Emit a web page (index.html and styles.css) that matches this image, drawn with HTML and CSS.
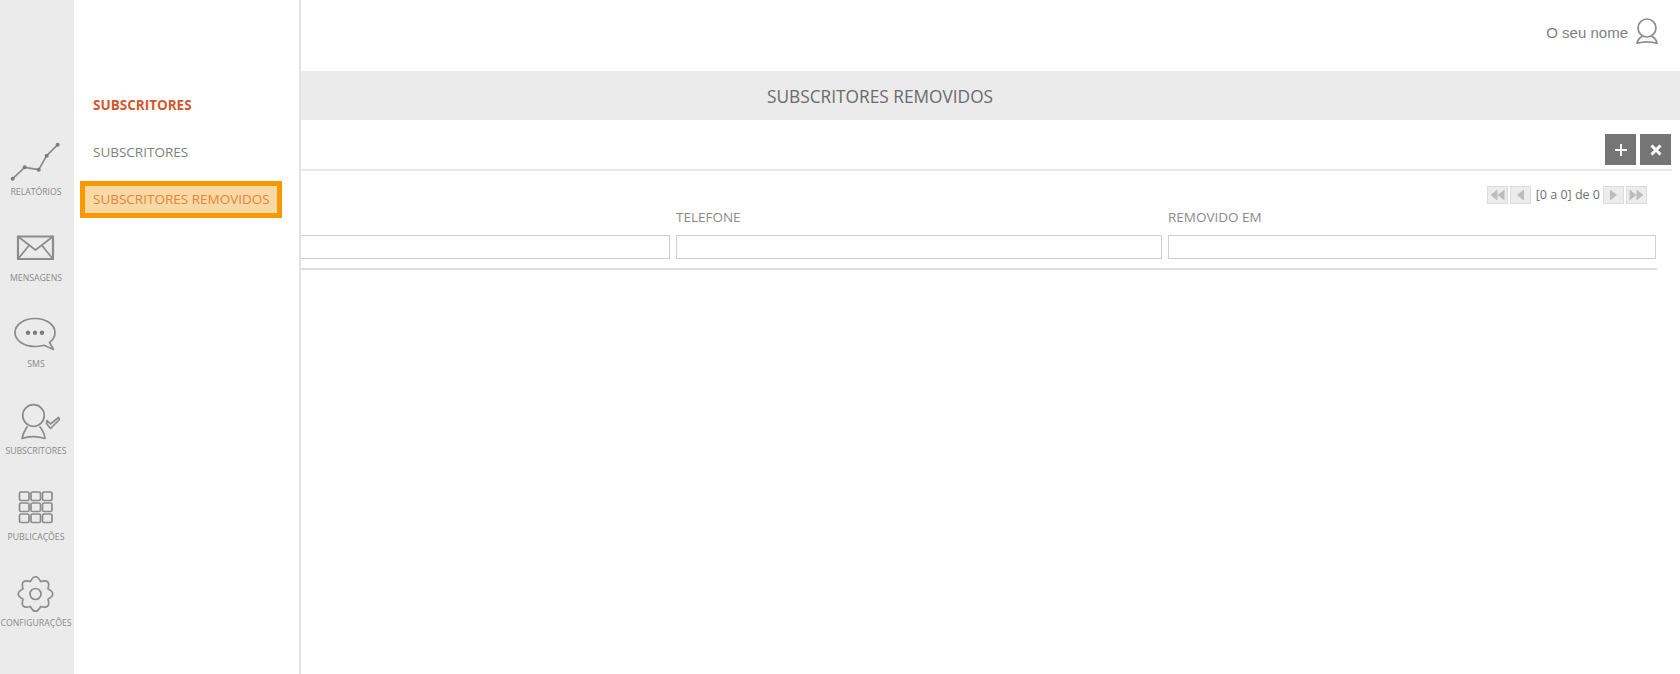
FILE: index.html
```html
<!DOCTYPE html>
<html lang="pt">
<head>
<meta charset="utf-8">
<title>Subscritores removidos</title>
<link rel="stylesheet" href="styles.css">
</head>
<body>
<div class="app">
  <nav class="rail">
    <a class="rail-item">
      <svg class="rail-icon" viewBox="0 0 74 40"><path class="ln" d="M12.7 35.7 24.7 24.3 38.7 26.7 46.7 12.7 57.7 1.7"/><g class="dot"><circle cx="12.7" cy="35.7" r="2"/><circle cx="24.7" cy="24.3" r="2"/><circle cx="38.7" cy="26.7" r="2"/><circle cx="46.7" cy="12.7" r="2"/><circle cx="57.7" cy="1.7" r="2"/></g></svg>
      <span class="rail-label">RELATÓRIOS</span>
    </a>
    <a class="rail-item">
      <svg class="rail-icon" viewBox="0 0 74 40"><path class="ln thick" d="M18 7.500H53V30H18Z"/><path class="ln" d="M18 7.500 35.500 21 53 7.500M18 30 29 16.500M53 30 42 16.500"/></svg>
      <span class="rail-label">MENSAGENS</span>
    </a>
    <a class="rail-item">
      <svg class="rail-icon" viewBox="0 0 74 40"><path class="ln" d="M35 3.500C24 3.500 15 9.500 15 17.500 15 25.500 24 31.500 35 31.500 38.500 31.500 41.500 31 44 30.200L53.500 34.500 49.500 27.500C52.800 25 55 21.500 55 17.500 55 9.500 46 3.500 35 3.500Z"/><g class="dot"><circle cx="28" cy="17.700" r="2.200"/><circle cx="35" cy="17.700" r="2.200"/><circle cx="42" cy="17.700" r="2.200"/></g></svg>
      <span class="rail-label">SMS</span>
    </a>
    <a class="rail-item">
      <svg class="rail-icon" viewBox="0 0 74 40"><circle class="ln" cx="33.500" cy="13.500" r="10.800"/><path class="ln" d="M27 25C25 28 23 31 22 36.500 29 34 37 34 45 36.500 44.500 31 42.500 28 40 25"/><path class="ln" d="M47 18.500 50.500 22 58.500 15.500 59.500 17.500 50.500 26.500 46.500 21.500Z"/></svg>
      <span class="rail-label">SUBSCRITORES</span>
    </a>
    <a class="rail-item">
      <svg class="rail-icon" viewBox="0 0 74 40">
        <g class="ln"><rect x="19.500" y="4" width="9.500" height="8.500" rx="1.500"/><rect x="31" y="4" width="9.500" height="8.500" rx="1.500"/><rect x="42.500" y="4" width="9.500" height="8.500" rx="1.500"/><rect x="19.500" y="15" width="9.500" height="8.500" rx="1.500"/><rect x="31" y="15" width="9.500" height="8.500" rx="1.500"/><rect x="42.500" y="15" width="9.500" height="8.500" rx="1.500"/><rect x="19.500" y="26" width="9.500" height="8.500" rx="1.500"/><rect x="31" y="26" width="9.500" height="8.500" rx="1.500"/><rect x="42.500" y="26" width="9.500" height="8.500" rx="1.500"/></g>
      </svg>
      <span class="rail-label">PUBLICAÇÕES</span>
    </a>
    <a class="rail-item">
      <svg class="rail-icon" viewBox="0 0 74 40"><path class="ln" d="M40.67 7.530Q51.060 4.440 47.970 14.830 57.500 20 47.970 25.170 51.060 35.560 40.670 32.470 35.500 42 30.330 32.470 19.940 35.560 23.030 25.170 13.500 20 23.030 14.830 19.940 4.440 30.330 7.530 35.500-2 40.670 7.530Z"/><circle class="ln" cx="35.500" cy="20" r="5.500"/></svg>
      <span class="rail-label">CONFIGURAÇÕES</span>
    </a>
  </nav>

  <main class="main">
    <header class="topbar">
      <span class="user-name">O seu nome</span>
      <svg class="user-icon" viewBox="0 0 22 26"><circle class="ln" cx="11" cy="10" r="9"/><path class="ln" d="M6 18.500C3.500 20 1.500 21.500 1 25.300 7 23.500 15 23.500 21 25.300 20.500 21.500 18.500 20 16 18.500"/></svg>
    </header>
    <div class="band"><h1 class="band-title">SUBSCRITORES REMOVIDOS</h1></div>
    <div class="toolbar">
      <button class="tool-btn" type="button"><svg viewBox="0 0 14 14"><path class="plus" d="M7 1V13M1 7H13"/></svg></button>
      <button class="tool-btn" type="button"><svg viewBox="0 0 14 14"><path class="times" d="M2.500 2.500 11.500 11.500M11.500 2.500 2.500 11.500"/></svg></button>
    </div>
    <section class="table">
      <div class="pager">
        <span class="pg-btn"><svg viewBox="0 0 19 16"><path d="M9.500 2.500V13.500L2.500 8ZM16.500 2.500V13.500L9.500 8Z"/></svg></span>
        <span class="pg-btn"><svg viewBox="0 0 19 16"><path d="M13 2.500V13.500L6 8Z"/></svg></span>
        <span class="pg-text">[0 a 0] de 0</span>
        <span class="pg-btn"><svg viewBox="0 0 19 16"><path d="M6 2.500V13.500L13 8Z"/></svg></span>
        <span class="pg-btn"><svg viewBox="0 0 19 16"><path d="M2.500 2.500V13.500L9.500 8ZM9.500 2.500V13.500L16.500 8Z"/></svg></span>
      </div>
      <div class="columns">
        <div class="col"><label class="col-label">&nbsp;</label><input class="col-input" type="text"></div>
        <div class="col"><label class="col-label">TELEFONE</label><input class="col-input" type="text"></div>
        <div class="col"><label class="col-label">REMOVIDO EM</label><input class="col-input" type="text"></div>
      </div>
    </section>
  </main>

  <aside class="panel">
    <h2 class="panel-title">SUBSCRITORES</h2>
    <a class="panel-item">SUBSCRITORES</a>
    <a class="panel-item active">SUBSCRITORES REMOVIDOS</a>
  </aside>
</div>
</body>
</html>
```
FILE: styles.css
```css
* { box-sizing: border-box; }
html, body { margin: 0; height: 100%; background: #fff; overflow: hidden; }
body { font-family: "Open Sans", sans-serif; color: #808080; }

.app { position: relative; display: flex; height: 674px; overflow: hidden; }

.ln { fill: none; stroke: #8c8c8c; stroke-width: 1.7; stroke-linejoin: round; stroke-linecap: round; }
.thick { stroke-width: 2.2; }
.dot { fill: #7d7d7d; }

.rail { flex: 0 0 74px; padding-top: 143px; background: #ebebeb; }
.rail-item { display: flex; flex-direction: column; align-items: center; height: 86.2px; }
.rail-icon { display: block; width: 74px; height: 40px; flex: none; overflow: visible; }
.rail-label { margin: 3px 2px 0 0; font-size: 8.7px; line-height: 12px; color: #8a8a8a; white-space: nowrap; }

.main { flex: 1; min-width: 0; display: flex; flex-direction: column; }

.topbar { height: 71px; display: flex; align-items: flex-start; justify-content: flex-end; gap: 8px; padding: 18px 22px 0 0; }
.user-name { font-family: "Liberation Sans", Arial, sans-serif; font-size: 15px; line-height: 30px; color: #808080; }
.user-icon { width: 22px; height: 26px; flex: none; }

.band { height: 49px; display: flex; align-items: center; justify-content: center; padding: 2px 0 0 6px; background: #ebebeb; }
.band-title { margin: 0; font-size: 17.3px; font-weight: 400; line-height: 22px; color: #6a6a6a; }

.toolbar { height: 51px; margin-right: 8px; display: flex; justify-content: flex-end; align-items: flex-start; gap: 4px; padding: 14px 1px 0 0; border-bottom: 2px solid #e8e8e8; }
.tool-btn { width: 31px; height: 31px; padding: 0; border: 0; background: #757575; display: flex; align-items: center; justify-content: center; }
.tool-btn svg { width: 14px; height: 14px; }
.plus { fill: none; stroke: #fff; stroke-width: 1.8; }
.times { fill: none; stroke: #fff; stroke-width: 3; }

.table { margin: 0 23px 0 110px; }
.pager { display: flex; justify-content: flex-end; align-items: center; gap: 2px; height: 18px; margin: 15px 10px 0 0; }
.pg-btn { width: 21px; height: 18px; border: 1px solid #dcdcdc; background: #ececec; display: block; }
.pg-btn svg { display: block; width: 19px; height: 16px; fill: #bcbcbc; }
.pg-text { margin: 0 1px 0 3px; font-size: 12.5px; line-height: 18px; color: #707070; white-space: nowrap; }

.columns { display: grid; grid-template-columns: 492px 492px 1fr; padding-bottom: 9px; margin-top: 4px; border-bottom: 2px solid #dcdcdc; }
.col { padding: 0 6px 0 0; }
.col:last-child { padding-right: 1px; }
.col-label { display: block; height: 18px; font-size: 13.5px; line-height: 18px; color: #8a8a8a; margin-bottom: 9px; }
.col-input { display: block; width: 100%; height: 24px; padding: 0; border: 1px solid #cfcfcf; background: #fff; outline: 0; }

.panel { position: absolute; left: 74px; top: 0; bottom: 0; width: 227px; padding: 96px 0 0 6px; background: #fff; border-right: 2px solid #e2e2e2; }
.panel-title { margin: 0 0 29px 13px; font-size: 13.5px; font-weight: 700; line-height: 18px; color: #d4572a; }
.panel-item { display: block; margin: 0 0 20px 13px; font-size: 13.5px; line-height: 18px; color: #808080; white-space: nowrap; }
.panel-item.active { width: 202px; height: 37px; margin: 0; padding: 0 0 0 8px; border: 5px solid #fb9800; background: #fbd9a4; color: #e4843e; line-height: 26px; }
```
